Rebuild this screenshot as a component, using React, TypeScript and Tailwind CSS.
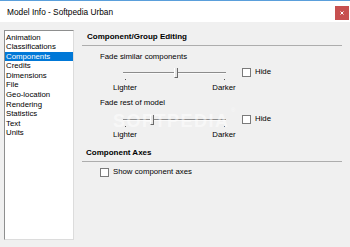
import React from "react";

const items = [
  "Animation",
  "Classifications",
  "Components",
  "Credits",
  "Dimensions",
  "File",
  "Geo-location",
  "Rendering",
  "Statistics",
  "Text",
  "Units",
];

function CheckBox() {
  return <div className="w-[9px] h-[9px] bg-white border border-[#7a7a7a] shrink-0" />;
}

function Slider({ thumb }: { thumb: string }) {
  return (
    <div className="relative w-[103px] h-[14px] pt-[6px]">
      <div className="h-[2px] border-t border-[#8c8c8c] border-b border-b-[#fafafa]" />
      <div className={`absolute top-[2px] w-[4px] h-[10px] bg-[#e6e6e6] border-l border-l-white border-r border-r-[#6a6a6a] border-b border-b-[#6a6a6a] ${thumb}`} />
      <div className="absolute top-[13px] left-[2px] w-px h-px bg-[#555]" />
      <div className="absolute top-[13px] left-[101px] w-px h-px bg-[#555]" />
    </div>
  );
}

function FadeGroup({ label, thumb, first }: { label: string; thumb: string; first?: boolean }) {
  return (
    <div className="pl-[18px]">
      <div className={`h-[10px] leading-[10px] ${first ? "mt-[6px]" : "mt-[5px]"}`}>{label}</div>
      <div className={`flex items-start ${first ? "mt-[4px]" : "mt-[5px]"}`}>
        <div className="ml-[23px]">
          <Slider thumb={thumb} />
        </div>
        <div className="ml-[16px] mt-[1px] flex items-center gap-[4px]">
          <CheckBox />
          <span className="leading-[10px]">Hide</span>
        </div>
      </div>
      <div className="flex mt-[3px] h-[10px] leading-[10px]">
        <div className="w-[40px] ml-[5px] text-center">Lighter</div>
        <div className="w-[40px] ml-[59px] text-center">Darker</div>
      </div>
    </div>
  );
}

export default function App() {
  return (
    <div
      className="relative w-[350px] h-[247px] bg-[#f0f0f0] border-t border-[#5a9fdb] text-black text-[7.8px] overflow-hidden"
      style={{ fontFamily: '"Liberation Sans", Arial, sans-serif' }}
    >
      <div className="h-[21px] bg-white flex items-start">
        <div className="pl-[7px] pt-[6px] text-[8.3px] leading-[10px] flex-1">Model Info - Softpedia Urban</div>
        <div className="mt-[5px] mr-[1px] w-[14px] h-[14px] bg-[#c75050] flex items-center justify-center">
          <svg width="4" height="4" viewBox="0 0 4 4">
            <path d="M0.5 0.5 L3.5 3.5 M3.5 0.5 L0.5 3.5" stroke="white" strokeWidth="1" />
          </svg>
        </div>
      </div>

      <div className="flex pt-[8px] pl-[4px]">
        <div className="w-[70px] h-[210px] bg-white border-t border-l border-[#8e8f8f] border-r border-r-[#dcdcdc] border-b border-b-[#dcdcdc] pt-[1.5px]">
          {items.map((it) => (
            <div
              key={it}
              className={`h-[9.6px] leading-[9.6px] pl-[1px] whitespace-nowrap ${
                it === "Components" ? "bg-[#0078d7] text-white" : ""
              }`}
            >
              {it}
            </div>
          ))}
        </div>

        <div className="ml-[8px] w-[260px]">
          <div className="h-[14px] leading-[14px] pl-[5px] font-bold text-[8px]">Component/Group Editing</div>
          <div className="mt-[1px] h-px bg-[#adadad]" />
          <FadeGroup label="Fade similar components" thumb="left-[51px]" first />
          <FadeGroup label="Fade rest of model" thumb="left-[27px]" />
          <div className="mt-[6px] h-[14px] leading-[14px] pl-[4px] font-bold text-[8px]">Component Axes</div>
          <div className="mt-[1px] h-px bg-[#adadad]" />
          <div className="mt-[5px] pl-[18px] flex items-center gap-[4px] h-[10px]">
            <CheckBox />
            <span className="leading-[10px]">Show component axes</span>
          </div>
        </div>
      </div>

      <div className="absolute left-[113px] top-[110px] text-[18px] leading-[20px] tracking-[1.5px] font-bold text-white opacity-50 select-none">
        SOFTPEDIA
      </div>
      <div className="absolute left-[231px] top-[106px] text-[6px] leading-[6px] text-white opacity-50">®</div>
    </div>
  );
}
